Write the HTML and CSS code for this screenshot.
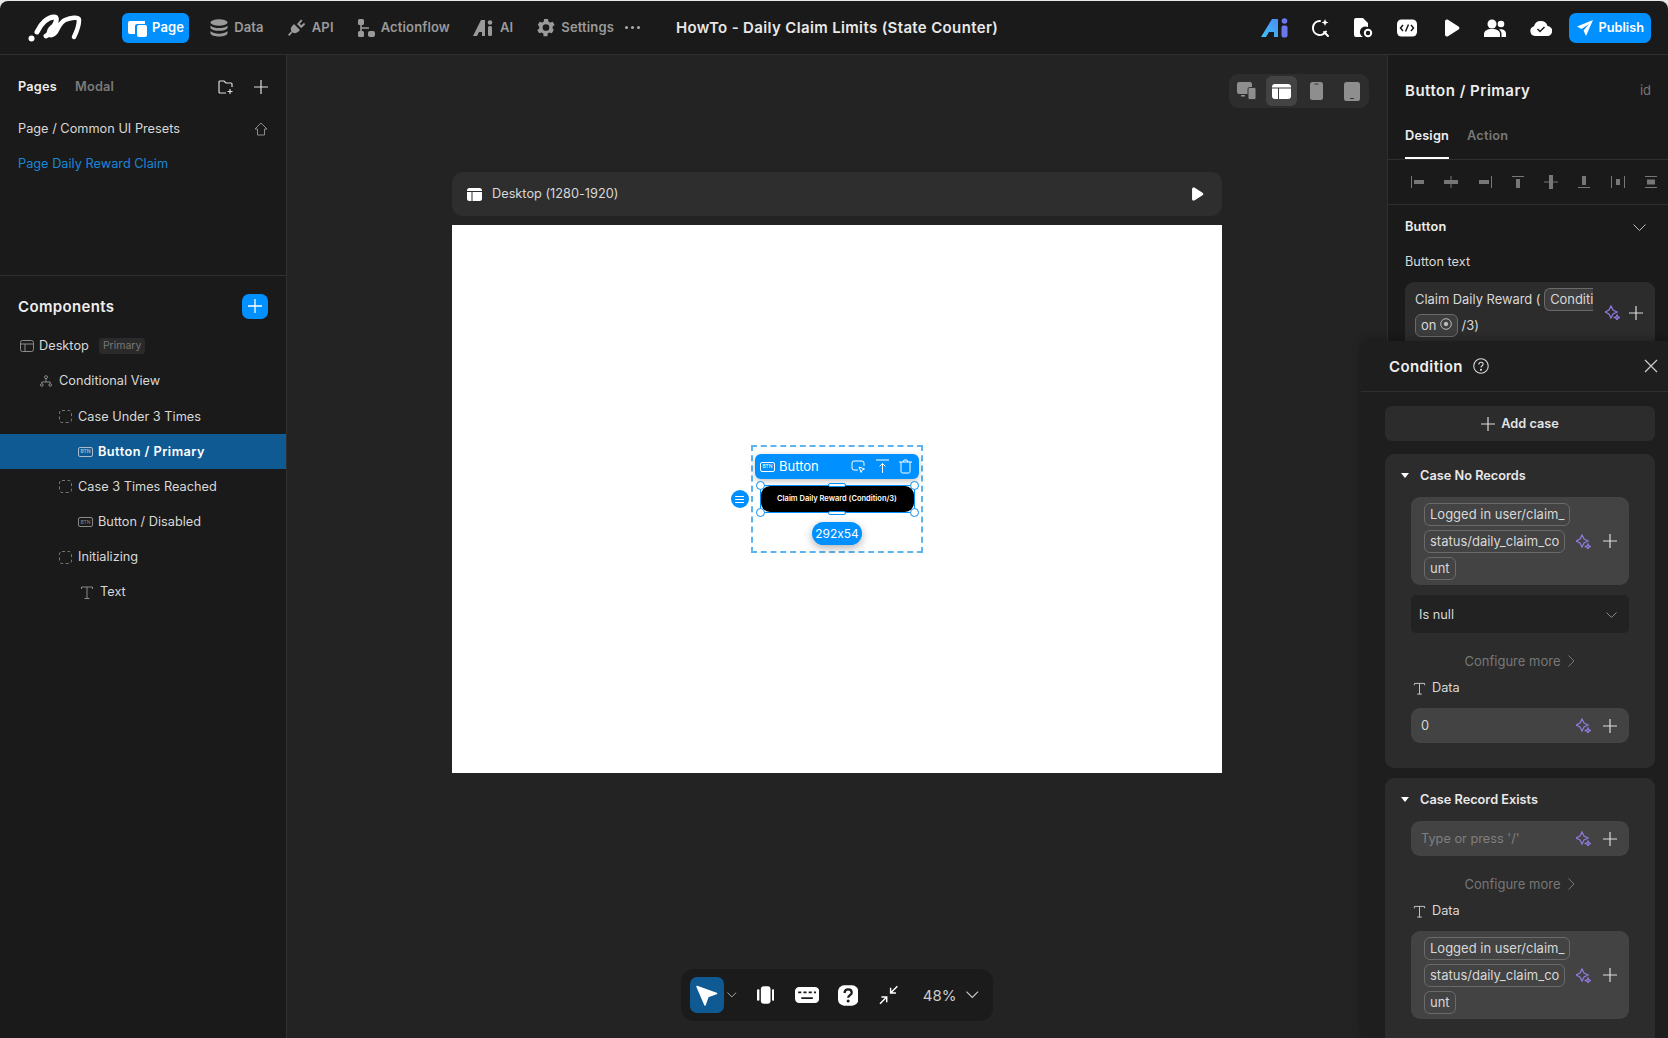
FILE: index.html
```html
<!DOCTYPE html>
<html>
<head>
  <meta charset="UTF-8">
  <title>HowTo - Daily Claim Limits</title>
  <link rel="stylesheet" href="styles.css">
</head>
<body>
  <div class="app">
    <header class="topbar">
      <svg class="logo" width="56" height="28" viewBox="0 0 56 28" fill="none" stroke="#fff" stroke-linecap="round" stroke-width="5"><circle cx="3.500" cy="24.500" r="3" fill="#fff" stroke="none"/><path d="M9 18C13 9 20 3 26 3c3 0 3 3 1 7-2 5-6 11-9 12"/><path d="M30 11c-4-1-9 4-9 8 0 4 6 2 8-3 2-4 4-8 8-10 5-2 14-4 14 0 0 6-3 13-5 17" stroke-width="4.500"/></svg>
      <nav class="nav">
        <a class="nav-item active"><svg width="21" height="19" viewBox="0 0 21 19" fill="#fff"><path d="M2 3h15v3H9a2 2 0 0 0-2 2v8H2a2 2 0 0 1-2-2V5a2 2 0 0 1 2-2z"/><rect x="9" y="7" width="10" height="12" rx="2"/></svg>Page</a>
        <a class="nav-item"><svg width="18" height="18" viewBox="0 0 18 18" fill="#9a9a9a"><ellipse cx="9" cy="3.500" rx="8.500" ry="3.200"/><path d="M.5 6.500C2 8.500 6 9 9 9s7-.5 8.500-2.500V9c-1 2-5 2.800-8.500 2.800S1.500 11 .5 9zM.5 12c1.500 2 5.500 2.700 8.500 2.700s7-.7 8.500-2.700v2.500c-1 2.200-5 3-8.500 3s-7.500-.8-8.500-3z"/></svg>Data</a>
        <a class="nav-item"><svg width="19" height="19" viewBox="0 0 19 19" fill="#9a9a9a"><path d="M7 6l6 6-2 2c-2 1.500-4 1.500-5.500.2L2.500 18 1 16.500l3.500-3.200C3.500 12 3.500 10 5 8.300z"/><path d="M11 5l3-3.500 1.500 1.300-2.800 3 1.500 1.500 3-2.500L18 6.500l-3 3-1 .5-4-4z"/></svg>API</a>
        <a class="nav-item"><svg width="18" height="18" viewBox="0 0 18 18" fill="#9a9a9a"><rect x="1" y="0" width="6" height="6" rx="1.500"/><rect x="1" y="12" width="6" height="6" rx="1.500"/><rect x="11" y="12" width="7" height="6" rx="2"/><path d="M3.200 5h1.600v3.200H12v1.600H4.800V13H3.200z"/></svg>Actionflow</a>
        <a class="nav-item"><svg width="21" height="16" viewBox="0 0 21 16" fill="#9a9a9a"><path d="M8 0h4v16H9v-4H6l-2 4H0z"/><circle cx="17" cy="2.500" r="2.300"/><rect x="15" y="6" width="4" height="10" rx="1.500"/></svg>AI</a>
        <a class="nav-item"><svg width="23" height="23" viewBox="0 0 24 24" fill="#9a9a9a"><path d="M19.400 13c.1-.3.100-.7.100-1s0-.7-.1-1l2.100-1.600-2-3.500-2.500 1a7 7 0 0 0-1.700-1L14.500 3h-4l-.4 2.900c-.6.300-1.200.6-1.700 1l-2.500-1-2 3.500L5.500 11c0 .3-.1.700-.1 1s0 .7.1 1l-2.100 1.600 2 3.500 2.500-1c.5.400 1.100.7 1.700 1l.4 2.900h4l.4-2.900c.6-.3 1.200-.6 1.700-1l2.500 1 2-3.500zM12.500 15.500a3.500 3.500 0 1 1 0-7 3.500 3.500 0 0 1 0 7z"/></svg>Settings</a>
        <a class="nav-dots"><i></i><i></i><i></i></a>
      </nav>
      <h1 class="doc-title">HowTo - Daily Claim Limits (State Counter)</h1>
      <div class="actions">
        <svg width="28" height="20" viewBox="0 0 28 20"><defs><linearGradient id="aig" x1="0" y1="1" x2="1" y2="0"><stop offset="0" stop-color="#3fc4f5"/><stop offset="1" stop-color="#4a8cf5"/></linearGradient></defs><path d="M11 1h6v18h-4v-5H8l-3 5H0z" fill="url(#aig)"/><circle cx="23.500" cy="3" r="2.800" fill="#6a78ee"/><rect x="20.500" y="7.500" width="6" height="12" rx="2" fill="#6a78ee"/></svg>
        <svg width="20" height="20" viewBox="0 0 20 20" fill="none" stroke="#fff" stroke-width="2" stroke-linecap="round"><path d="M10 3a7 7 0 1 0 6 10.500M14 14l4 4"/><path d="M15 1l1 2.500L18.500 4.500 16 5.500 15 8l-1-2.500L11.500 4.500 14 3.500z" fill="#fff" stroke="none"/></svg>
        <svg width="19" height="20" viewBox="0 0 19 20"><path d="M2 0h7l5 5v4a5.500 5.500 0 0 0-5 10H2a2 2 0 0 1-2-2V2a2 2 0 0 1 2-2z" fill="#fff"/><circle cx="14" cy="15" r="3.200" fill="none" stroke="#fff" stroke-width="2"/></svg>
        <svg width="20" height="18" viewBox="0 0 20 18"><rect width="20" height="17" y=".5" rx="4.500" fill="#fff"/><path d="M6 6L3.500 9 6 12M14 6l2.500 3L14 12M11.500 5.500l-3 7" fill="none" stroke="#1a1a1a" stroke-width="1.500"/></svg>
        <svg width="16" height="18" viewBox="0 0 16 18" fill="#fff"><path d="M1 2.500C1 .8 2.500 0 4 .8l10.500 6.600c1.300.8 1.300 2.400 0 3.200L4 17.200c-1.500.8-3 0-3-1.700z"/></svg>
        <svg width="22" height="18" viewBox="0 0 22 18" fill="#fff"><circle cx="8" cy="5" r="4.500"/><path d="M0 18v-3c0-3 3-5 8-5s8 2 8 5v3z"/><circle cx="17" cy="5" r="3.300"/><path d="M17.500 18v-3c0-2-1-3.500-2.500-4.500 4-.8 7 1 7 4v3.500z"/></svg>
        <svg width="22" height="16" viewBox="0 0 22 16"><path d="M5 16a5 5 0 0 1-1-9.800A7 7 0 0 1 17.500 6 5 5 0 0 1 17 16z" fill="#fff"/><path d="M7.500 9l2.500 2.500L14.500 7" fill="none" stroke="#1a1a1a" stroke-width="1.500"/></svg>
        <a class="publish"><svg width="16" height="16" viewBox="0 0 16 16" fill="#fff"><path d="M16 0L0 6.500l4.500 2.500L12 4 6.500 10.500 9 16z"/></svg>Publish</a>
      </div>
    </header>

    <div class="workspace">
      <aside class="left">
        <section class="pages">
          <div class="pages-head">
            <b class="tab on">Pages</b><b class="tab">Modal</b>
            <span class="spacer"></span>
            <svg width="16" height="15" viewBox="0 0 16 15" fill="none" stroke="#ddd" stroke-width="1.200"><path d="M8 13H2a1 1 0 0 1-1-1V2a1 1 0 0 1 1-1h4l2 2h5a1 1 0 0 1 1 1v3M12 9v5M9.500 11.500h5"/></svg>
            <svg class="ico-gap" width="14" height="14" viewBox="0 0 14 14" stroke="#ddd" stroke-width="1.200"><path d="M7 0v14M0 7h14"/></svg>
          </div>
          <div class="page-row">Page / Common UI Presets<span class="spacer"></span><svg width="14" height="14" viewBox="0 0 14 14" fill="none" stroke="#8a8a8a"><path d="M1 7l6-6 6 6h-2.500v6h-7V7z"/></svg></div>
          <div class="page-row current">Page Daily Reward Claim</div>
        </section>

        <section class="components">
          <div class="comp-head">Components<span class="spacer"></span><a class="add-btn"><svg width="14" height="14" viewBox="0 0 14 14" stroke="#fff" stroke-width="1.300"><path d="M7 0v14M0 7h14"/></svg></a></div>
          <ul class="tree">
            <li class="node lv0"><svg width="14" height="12" viewBox="0 0 14 12" fill="none" stroke="#8a8a8a"><rect x=".5" y=".5" width="13" height="11" rx="2"/><path d="M.5 4h13M5 4v7.500"/></svg>Desktop<span class="tag">Primary</span></li>
            <li class="node lv1"><svg width="12" height="12" viewBox="0 0 12 12" fill="none" stroke="#8a8a8a"><circle cx="6" cy="2.200" r="1.500"/><circle cx="1.800" cy="10" r="1.300"/><circle cx="10.200" cy="10" r="1.300"/><path d="M6 4v3M1.800 8.500V7h8.400v1.500"/></svg>Conditional View</li>
            <li class="node lv2"><svg class="dash" width="13" height="13" viewBox="0 0 13 13" fill="none"><rect x=".5" y=".5" width="12" height="12" rx="2.500"/></svg>Case Under 3 Times</li>
            <li class="node lv3 selected"><span class="btn-ico">BTN</span>Button / Primary</li>
            <li class="node lv2"><svg class="dash" width="13" height="13" viewBox="0 0 13 13" fill="none"><rect x=".5" y=".5" width="12" height="12" rx="2.500"/></svg>Case 3 Times Reached</li>
            <li class="node lv3"><span class="btn-ico">BTN</span>Button / Disabled</li>
            <li class="node lv2"><svg class="dash" width="13" height="13" viewBox="0 0 13 13" fill="none"><rect x=".5" y=".5" width="12" height="12" rx="2.500"/></svg>Initializing</li>
            <li class="node lv3"><svg class="t-ico" width="14" height="13" viewBox="0 0 14 13" fill="none" stroke="#8a8a8a"><path d="M1.500 3V1h11v2M7 1v11.500M4.500 12.500h5"/></svg>Text</li>
          </ul>
        </section>
      </aside>

      <main class="canvas">
        <div class="devices">
          <a class="dev"><svg width="19" height="18" viewBox="0 0 19 18" fill="#8e8e8e"><rect width="15" height="12" rx="2"/><rect x="4" y="13" width="4" height="1.500"/><rect x="11" y="5.500" width="8" height="12" rx="1.500" stroke="#333"/></svg></a>
          <a class="dev on"><svg width="19" height="15" viewBox="0 0 19 15"><rect width="19" height="15" rx="3" fill="#fff"/><path d="M0 4h19M6.500 4v11" stroke="#3c3c3c"/></svg></a>
          <a class="dev"><svg width="13" height="18" viewBox="0 0 13 18"><rect width="13" height="18" rx="2.500" fill="#8e8e8e"/><path d="M4.500 2h4" stroke="#333"/></svg></a>
          <a class="dev"><svg width="16" height="19" viewBox="0 0 16 19"><rect width="16" height="19" rx="2.500" fill="#8e8e8e"/><path d="M6 16.500h4" stroke="#333"/></svg></a>
        </div>

        <div class="frame-bar">
          <svg width="15" height="13" viewBox="0 0 15 13"><rect width="15" height="13" rx="2.500" fill="#fff"/><path d="M0 3.500h15M5 3.500V13" stroke="#2e2e2e"/></svg>
          <span>Desktop (1280-1920)</span>
          <span class="spacer"></span>
          <svg width="13" height="14" viewBox="0 0 16 18" fill="#fff"><path d="M1 2.500C1 .8 2.500 0 4 .8l10.500 6.600c1.300.8 1.300 2.400 0 3.200L4 17.200c-1.500.8-3 0-3-1.700z"/></svg>
        </div>
        <div class="artboard">
          <div class="selection">
            <div class="sel-bar">
              <span class="btn-ico light">BTN</span><span class="sel-name">Button</span>
              <span class="spacer"></span>
              <svg width="15" height="15" viewBox="0 0 15 15" fill="none" stroke="#fff"><path d="M7 11H3a2 2 0 0 1-2-2V4a2 2 0 0 1 2-2h8a2 2 0 0 1 2 2v3"/><path d="M8 8l5.500 2-2.300 1 -1 2.500z"/></svg>
              <svg width="13" height="15" viewBox="0 0 13 15" fill="none" stroke="#fff"><path d="M0 1h13M6.500 14V4.500M3.500 7.500l3-3 3 3"/></svg>
              <svg width="13" height="15" viewBox="0 0 13 15" fill="none" stroke="#fff"><path d="M0 3h13M4 3l1-2h3l1 2M2 3v9.500A1.500 1.500 0 0 0 3.500 14h6a1.500 1.500 0 0 0 1.500-1.500V3"/></svg>
            </div>
            <div class="sel-target">
              <div class="claim">Claim Daily Reward (Condition/3)</div>
              <i class="handle tl"></i><i class="handle tr"></i><i class="handle bl"></i><i class="handle br"></i>
              <i class="grip top"></i><i class="grip bottom"></i>
              <a class="sel-menu"><i></i><i></i><i></i></a>
            </div>
            <div class="sel-size">292x54</div>
          </div>
        </div>

        <div class="dock">
          <a class="dock-arrow"><svg width="22" height="22" viewBox="0 0 22 22" fill="#fff"><path d="M1 2.500L20.500 9.500 12 12.500 9 21z" stroke="#fff" stroke-linejoin="round" stroke-width="1.500"/></svg></a>
          <svg class="caret" width="10" height="6" viewBox="0 0 10 6" fill="none" stroke="#aaa"><path d="M.5.500L5 5 9.500.500"/></svg>
          <svg width="18" height="18" viewBox="0 0 18 18" fill="#fff"><rect x="4" y="0" width="10" height="18" rx="3"/><rect x="0" y="3" width="2.500" height="12" rx="1.200"/><rect x="15.500" y="3" width="2.500" height="12" rx="1.200"/></svg>
          <svg width="25" height="16" viewBox="0 0 23 15"><rect width="23" height="15" rx="4" fill="#fff"/><path d="M3 5h3M8 5h3M13 5h3M18 5h2M6 10.500h11" stroke="#1b1b1b" stroke-width="1.800"/></svg>
          <svg class="help" width="21" height="21" viewBox="0 0 20 20"><rect width="20" height="20" rx="6" fill="#fff"/><path d="M6.500 7.500C6.500 5.500 8 4 10 4s3.500 1.300 3.500 3.200c0 2.300-3.500 2.500-3.500 5" fill="none" stroke="#1b1b1b" stroke-width="2.200"/><circle cx="10" cy="15.500" r="1.500" fill="#1b1b1b"/></svg>
          <svg width="20" height="20" viewBox="0 0 20 20" fill="none" stroke="#fff" stroke-width="1.500"><path d="M19 1l-7 7M12 2.500V8h5.500M1 19l7-7M2.500 12H8v5.500"/></svg>
          <span class="zoom-val">48%</span>
          <svg width="13" height="8" viewBox="0 0 13 8" fill="none" stroke="#ccc" stroke-width="1.200"><path d="M.5.500L6.500 6.500 12.500.500"/></svg>
        </div>
      </main>

      <aside class="right">
        <div class="prop-head"><b>Button / Primary</b><span class="spacer"></span><span class="id">id</span></div>
        <div class="prop-tabs"><b class="ptab on">Design</b><b class="ptab">Action</b></div>
        <div class="aligns">
          <svg width="14" height="12" viewBox="0 0 14 12"><path d="M.5 0v12" stroke="#777"/><rect x="3" y="4" width="10" height="4" fill="#777"/></svg>
          <svg width="14" height="12" viewBox="0 0 14 12"><path d="M7 0v12" stroke="#777"/><rect y="4" width="14" height="4" fill="#777"/></svg>
          <svg width="14" height="12" viewBox="0 0 14 12"><path d="M13.500 0v12" stroke="#777"/><rect x="1" y="4" width="10" height="4" fill="#777"/></svg>
          <svg width="14" height="12" viewBox="0 0 14 12"><path d="M1 .500h12" stroke="#777"/><rect x="5" y="3" width="4" height="9" fill="#777"/></svg>
          <svg width="14" height="14" viewBox="0 0 14 14"><path d="M0 7h14" stroke="#777"/><rect x="5" width="4" height="14" fill="#777"/></svg>
          <svg width="14" height="12" viewBox="0 0 14 12"><path d="M1 11.500h12" stroke="#777"/><rect x="5" y="0" width="4" height="9" fill="#777"/></svg>
          <svg width="14" height="12" viewBox="0 0 14 12"><path d="M.5 0v12M13.500 0v12" stroke="#777"/><rect x="5" y="3" width="4" height="6" fill="#777"/></svg>
          <svg width="14" height="12" viewBox="0 0 14 12"><path d="M1 .500h12M1 11.500h12" stroke="#777"/><rect x="3" y="3.500" width="8" height="5" fill="#777"/></svg>
        </div>
        <div class="prop-section">
          <div class="section-title"><b>Button</b><span class="spacer"></span><svg width="13" height="7" viewBox="0 0 13 7" fill="none" stroke="#bbb"><path d="M.5.500L6.500 6.500 12.500.500"/></svg></div>
          <div class="field-label">Button text</div>
          <div class="text-input flat">
            <div class="inline-flow">Claim Daily Reward ( <span class="chip cut">Conditi</span> <span class="chip wrap">on <svg width="12" height="12" viewBox="0 0 12 12" fill="none" stroke="#bbb"><circle cx="6" cy="6" r="5.300"/><circle cx="6" cy="6" r="1.800" fill="#bbb"/></svg></span> /3)</div>
            <svg class="spark" width="15" height="15" viewBox="0 0 15 15" fill="none" stroke="#8f78d8" stroke-width="1.300"><path d="M6 1l2 4 4 2-4 2-2 4-2-4-4-2 4-2zM12 10l.8 1.700 1.700.8-1.700.8-.8 1.700-.8-1.700-1.700-.8 1.700-.8z"/></svg>
            <svg class="plus" width="14" height="14" viewBox="0 0 14 14" stroke="#ddd" stroke-width="1.200"><path d="M7 0v14M0 7h14"/></svg>
          </div>
        </div>

        <div class="condition">
          <div class="cond-head"><b>Condition</b><svg width="16" height="16" viewBox="0 0 15 15" fill="none" stroke="#ddd"><circle cx="7.500" cy="7.500" r="6.800"/><path d="M5.500 6c0-1.200.9-2 2-2s2 .8 2 1.800c0 1.400-2 1.500-2 3"/><circle cx="7.500" cy="11" r=".5" fill="#ddd"/></svg><span class="spacer"></span><svg width="14" height="14" viewBox="0 0 14 14" stroke="#ccc" stroke-width="1.200"><path d="M1 1l12 12M13 1L1 13"/></svg></div>
          <div class="cond-body">
            <a class="add-case"><svg width="14" height="14" viewBox="0 0 14 14" stroke="#ddd" stroke-width="1.200"><path d="M7 0v14M0 7h14"/></svg>Add case</a>

            <div class="case first">
              <div class="case-title"><i class="tri"></i>Case No Records</div>
              <div class="text-input tall">
                <div class="chips"><span class="chip">Logged in user/claim_</span><span class="chip">status/daily_claim_co</span><span class="chip">unt</span></div>
                <svg class="spark" width="15" height="15" viewBox="0 0 15 15" fill="none" stroke="#8f78d8" stroke-width="1.300"><path d="M6 1l2 4 4 2-4 2-2 4-2-4-4-2 4-2zM12 10l.8 1.700 1.700.8-1.700.8-.8 1.700-.8-1.700-1.700-.8 1.700-.8z"/></svg>
                <svg class="plus" width="14" height="14" viewBox="0 0 14 14" stroke="#ddd" stroke-width="1.200"><path d="M7 0v14M0 7h14"/></svg>
              </div>
              <div class="select">Is null<span class="spacer"></span><svg width="11" height="6" viewBox="0 0 11 6" fill="none" stroke="#888"><path d="M.5.500L5.500 5.500 10.500.500"/></svg></div>
              <div class="more">Configure more<svg width="7" height="12" viewBox="0 0 7 12" fill="none" stroke="#777"><path d="M.5.500L6 6 .5 11.500"/></svg></div>
              <div class="data-label"><svg width="13" height="13" viewBox="0 0 14 13" fill="none" stroke="#ccc"><path d="M1.500 3V1h11v2M7 1v11.500M4.500 12.500h5"/></svg>Data</div>
              <div class="text-input">
                <div class="value">0</div>
                <svg class="spark" width="15" height="15" viewBox="0 0 15 15" fill="none" stroke="#8f78d8" stroke-width="1.300"><path d="M6 1l2 4 4 2-4 2-2 4-2-4-4-2 4-2zM12 10l.8 1.700 1.700.8-1.700.8-.8 1.700-.8-1.700-1.700-.8 1.700-.8z"/></svg>
                <svg class="plus" width="14" height="14" viewBox="0 0 14 14" stroke="#ddd" stroke-width="1.200"><path d="M7 0v14M0 7h14"/></svg>
              </div>
            </div>

            <div class="case">
              <div class="case-title"><i class="tri"></i>Case Record Exists</div>
              <div class="text-input">
                <div class="value muted">Type or press '/'</div>
                <svg class="spark" width="15" height="15" viewBox="0 0 15 15" fill="none" stroke="#8f78d8" stroke-width="1.300"><path d="M6 1l2 4 4 2-4 2-2 4-2-4-4-2 4-2zM12 10l.8 1.700 1.700.8-1.700.8-.8 1.700-.8-1.700-1.700-.8 1.700-.8z"/></svg>
                <svg class="plus" width="14" height="14" viewBox="0 0 14 14" stroke="#ddd" stroke-width="1.200"><path d="M7 0v14M0 7h14"/></svg>
              </div>
              <div class="more">Configure more<svg width="7" height="12" viewBox="0 0 7 12" fill="none" stroke="#777"><path d="M.5.500L6 6 .5 11.500"/></svg></div>
              <div class="data-label"><svg width="13" height="13" viewBox="0 0 14 13" fill="none" stroke="#ccc"><path d="M1.500 3V1h11v2M7 1v11.500M4.500 12.500h5"/></svg>Data</div>
              <div class="text-input tall">
                <div class="chips"><span class="chip">Logged in user/claim_</span><span class="chip">status/daily_claim_co</span><span class="chip">unt</span></div>
                <svg class="spark" width="15" height="15" viewBox="0 0 15 15" fill="none" stroke="#8f78d8" stroke-width="1.300"><path d="M6 1l2 4 4 2-4 2-2 4-2-4-4-2 4-2zM12 10l.8 1.700 1.700.8-1.700.8-.8 1.700-.8-1.700-1.700-.8 1.700-.8z"/></svg>
                <svg class="plus" width="14" height="14" viewBox="0 0 14 14" stroke="#ddd" stroke-width="1.200"><path d="M7 0v14M0 7h14"/></svg>
              </div>
            </div>
          </div>
        </div>
      </aside>
    </div>
  </div>
</body>
</html>
```

FILE: styles.css
```css
* {
  box-sizing: border-box;
}

html,
body {
  margin: 0;
  height: 100%;
  overflow: hidden;
  background: #e8e8e8;
}

body {
  font: 12.750px/1.4 Inter, "Noto Sans", sans-serif;
  font-variant-ligatures: no-contextual;
  color: #d8d8d8;
}

b {
  font-weight: 600;
  letter-spacing: 0.2px;
}

a {
  cursor: pointer;
}

.spacer {
  flex: 1 1 0%;
}

.app {
  margin-top: 1px;
  height: 1037px;
  display: flex;
  flex-direction: column;
  background: #1a1a1a;
  border-radius: 8px 8px 0 0;
  overflow: hidden;
}

/* top bar */
.topbar {
  flex: 0 0 54px;
  display: flex;
  align-items: center;
  padding: 0 17px 0 28px;
  border-bottom: 1px solid #303030;
}

.logo {
  flex: 0 0 auto;
  margin-right: 38px;
}

.nav {
  display: flex;
  align-items: center;
  gap: 23px;
  width: 554px;
}

.nav-item {
  display: flex;
  align-items: center;
  gap: 6px;
  height: 30px;
  font-weight: 600;
  font-size: 13px;
  letter-spacing: 0.15px;
  color: #9a9a9a;
}

  .nav-item:nth-child(6) {
    gap: 4px;
    margin-left: -2px;
  }

.nav-item.active {
  gap: 3px;
  margin-right: -2px;
  padding: 0 5px 0 6px;
  background: #0090ff;
  border-radius: 6px;
  color: #fff;
}

.nav-dots {
  display: flex;
  gap: 3px;
  margin-left: -12px;
}

  .nav-dots i {
    width: 3px;
    height: 3px;
    background: #aaa;
    border-radius: 50%;
  }

.doc-title {
  margin: 0;
  font-size: 15px;
  font-weight: 600;
  letter-spacing: 0.35px;
  color: #e8e8e8;
  white-space: nowrap;
}

.actions {
  margin-left: auto;
  display: flex;
  align-items: center;
  gap: 24px;
}

  .actions svg:nth-child(2) {
    margin-left: -3px;
  }

  .actions svg:nth-child(5) {
    margin-left: 3px;
  }

.publish {
  display: flex;
  align-items: center;
  gap: 6px;
  height: 30px;
  margin-left: -7px;
  padding: 0 7px 0 8px;
  background: #0090ff;
  border-radius: 7px;
  font-weight: 600;
  color: #fff;
}

.workspace {
  flex: 1 1 0%;
  min-height: 0;
  display: flex;
}

/* left panel */
.left {
  flex: 0 0 287px;
  border-right: 1px solid #303030;
}

.pages {
  height: 221px;
  padding: 0 18px;
  border-bottom: 1px solid #303030;
}

.pages-head {
  height: 56px;
  padding-top: 8px;
  display: flex;
  align-items: center;
  gap: 18px;
}

.ico-gap {
  margin-left: 2px;
}

.tab {
  color: #7a7a7a;
}

  .tab.on {
    color: #eee;
  }

.page-row {
  height: 35px;
  display: flex;
  align-items: center;
}

  .page-row.current {
    color: #1a86d8;
  }

.comp-head {
  height: 46px;
  margin-top: 7px;
  padding: 0 18px;
  display: flex;
  align-items: center;
  font-size: 15px;
  font-weight: 600;
  letter-spacing: 0.35px;
  color: #eee;
}

.add-btn {
  width: 26px;
  height: 25px;
  display: flex;
  align-items: center;
  justify-content: center;
  background: #0090ff;
  border-radius: 7px;
}

.tree {
  margin: -1px 0 0;
  padding: 0;
  list-style: none;
}

.node {
  height: 35.200px;
  padding-top: 1px;
  display: flex;
  align-items: center;
  gap: 7px;
}

.lv0 { padding-left: 20px; gap: 5px; }
.lv1 { padding-left: 40px; }
.lv2 { padding-left: 59px; gap: 6px; }
.lv3 { padding-left: 78px; gap: 5px; }

.node.selected {
  background: #0f5a93;
  color: #fff;
  font-weight: 600;
  letter-spacing: 0.45px;
}

.dash {
  stroke: #777;
  stroke-dasharray: 3 2.500;
}

.t-ico {
  margin: 0 1px 0 2px;
}

.btn-ico {
  width: 15px;
  height: 10px;
  display: inline-flex;
  align-items: center;
  justify-content: center;
  border: 1px solid #8a8a8a;
  border-radius: 2px;
  font-size: 5px;
  line-height: 1;
  letter-spacing: 0;
  color: #8a8a8a;
}

  .selected .btn-ico {
    border-color: #a8bccb;
    color: #a8bccb;
  }

  .btn-ico.light {
    border-color: #fff;
    color: #fff;
  }

.tag {
  margin-left: 5px;
  padding: 0 4px;
  background: #2a2a2a;
  border-radius: 3px;
  font-size: 10.500px;
  line-height: 16px;
  color: #777;
}

/* canvas */
.canvas {
  position: relative;
  flex: 1 1 0%;
  min-width: 0;
  padding: 117px 165px 0;
  background: #232323;
}

.devices {
  position: absolute;
  top: 19px;
  right: 18px;
  display: flex;
  background: #2d2d2d;
  border-radius: 9px;
}

.dev {
  width: 35px;
  height: 34px;
  display: flex;
  align-items: center;
  justify-content: center;
  border: 2px solid transparent;
  background-clip: padding-box;
  border-radius: 8px;
}

  .dev.on {
    background-color: #434343;
  }

.frame-bar {
  height: 44px;
  display: flex;
  align-items: center;
  gap: 10px;
  padding: 0 18px 0 15px;
  background: #2e2e2e;
  border-radius: 11px;
}

.artboard {
  margin-top: 9px;
  height: 548px;
  display: flex;
  align-items: flex-start;
  justify-content: center;
  background: #fff;
}

.selection {
  margin-top: 220px;
  width: 172px;
  height: 108px;
  padding: 7px 2px 0;
  border: 2px dashed #5db4ee;
  display: flex;
  flex-direction: column;
  align-items: center;
}

.sel-bar {
  width: 100%;
  height: 25px;
  flex: 0 0 auto;
  display: flex;
  align-items: center;
  gap: 9px;
  padding: 0 7px 0 5px;
  background: #0090ff;
  border-radius: 6px;
  color: #fff;
  font-size: 13px;
  box-shadow: 0 2px 6px rgba(0, 0, 0, 0.25);
}

  .sel-bar svg {
    margin-left: 1px;
  }

.sel-name {
  margin-left: -5px;
}

.sel-target {
  position: relative;
  width: 155px;
  height: 28px;
  margin-top: 6px;
  flex: 0 0 auto;
  border: 1px solid #0090ff;
}

.claim {
  height: 100%;
  display: flex;
  align-items: center;
  justify-content: center;
  background: #000;
  border-radius: 9px;
  font-size: 7.500px;
  font-weight: 600;
  color: #fff;
}

.handle {
  position: absolute;
  width: 9px;
  height: 9px;
  background: #fff;
  border: 1px solid #0090ff;
  border-radius: 50%;
}

.tl { left: -5px; top: -5px; }
.tr { right: -5px; top: -5px; }
.bl { left: -5px; bottom: -5px; }
.br { right: -5px; bottom: -5px; }

.grip {
  position: absolute;
  left: 50%;
  width: 18px;
  height: 4px;
  margin-left: -9px;
  background: #fff;
  border: 1px solid #0090ff;
  border-radius: 2px;
}

.grip.top { top: -3px; }
.grip.bottom { bottom: -3px; }

.sel-menu {
  position: absolute;
  left: -30px;
  top: 4px;
  width: 18px;
  height: 18px;
  display: flex;
  flex-direction: column;
  align-items: center;
  justify-content: center;
  gap: 2px;
  background: #0090ff;
  border-radius: 50%;
}

  .sel-menu i {
    width: 9px;
    height: 1px;
    background: #fff;
  }

.sel-size {
  margin-top: 9px;
  padding: 0 3px;
  flex: 0 0 auto;
  background: #0090ff;
  border-radius: 12px;
  line-height: 23px;
  color: #fff;
  font-size: 12px;
  box-shadow: 0 3px 8px rgba(0, 0, 0, 0.3);
}

.dock {
  position: absolute;
  left: 394px;
  bottom: 17px;
  width: 312px;
  height: 52px;
  display: flex;
  align-items: center;
  padding: 0 14px 0 9px;
  gap: 21px;
  background: #1b1b1b;
  border-radius: 13px;
}

.dock-arrow {
  width: 35px;
  height: 36px;
  display: flex;
  align-items: center;
  justify-content: center;
  background: #0f5a93;
  border-radius: 7px;
}

.caret {
  margin-left: -18px;
  margin-right: -1px;
}

.help {
  margin-left: -2px;
}

.zoom-val {
  margin-left: 3px;
  margin-right: -11px;
  font-size: 15px;
  color: #ccc;
}

/* right panel */
.right {
  position: relative;
  flex: 0 0 281px;
  border-left: 1px solid #303030;
  background: #1a1a1a;
}

.prop-head {
  height: 69px;
  padding: 2px 17px 0;
  display: flex;
  align-items: center;
  font-size: 15px;
  color: #eee;
}

  .prop-head b {
    letter-spacing: 0.5px;
  }

.id {
  font-size: 13px;
  color: #777;
}

.prop-tabs {
  height: 36px;
  display: flex;
  gap: 18px;
  padding-left: 17px;
  border-bottom: 1px solid #303030;
}

.ptab {
  padding-top: 3px;
  color: #777;
}

  .ptab.on {
    border-bottom: 2px solid #fff;
    color: #eee;
  }

.aligns {
  height: 45px;
  display: flex;
  align-items: center;
  gap: 19.300px;
  padding-left: 23px;
  border-bottom: 1px solid #303030;
}

.prop-section {
  padding: 0 13px 0 17px;
}

.section-title {
  height: 44px;
  display: flex;
  align-items: center;
  padding-right: 9px;
  color: #eee;
}

.field-label {
  height: 24px;
  margin-top: 4px;
  margin-bottom: 5px;
}

.text-input {
  display: flex;
  align-items: center;
  min-height: 35px;
  padding: 0 10px;
  background: #434343;
  border-radius: 9px;
  gap: 9px;
}

  .text-input.flat {
    height: 70px;
    gap: 6px;
    background: #2c2c2c;
    padding-bottom: 9px;
  }

  .text-input.tall {
    height: 88px;
  }

.inline-flow {
  flex: 1 1 0%;
  min-width: 0;
  line-height: 26px;
  font-size: 12.900px;
}

.value {
  flex: 1 1 0%;
}

.muted {
  color: #7f7f7f;
}

.spark {
  flex: 0 0 auto;
}

.plus {
  flex: 0 0 auto;
  margin: 0 2px 0 3px;
}

.chips {
  flex: 1 1 0%;
  min-width: 0;
  display: flex;
  flex-wrap: wrap;
  gap: 4px;
  padding-left: 3px;
  font-size: 13px;
}

.chip {
  display: inline-block;
  padding: 0 5px;
  border: 1px solid #6a6a6a;
  border-radius: 6px;
  line-height: 21px;
  white-space: nowrap;
}

  .chip.cut {
    border-right: 0;
    border-radius: 6px 0 0 6px;
    background: #3d3d3d;
    padding-right: 0;
  }

  .chip.wrap {
    background: #3d3d3d;
  }

/* condition drawer */
.condition {
  position: absolute;
  left: -27px;
  right: 0;
  top: 286px;
  bottom: 0;
  background: #1e1e1e;
  border-radius: 8px 0 0 0;
  box-shadow: 0 -2px 8px rgba(0, 0, 0, 0.25);
  overflow: hidden;
}

.cond-head {
  height: 51px;
  display: flex;
  align-items: center;
  gap: 10px;
  padding: 0 10px 0 28px;
  border-bottom: 1px solid #2e2e2e;
  font-size: 15px;
  color: #eee;
}

  .cond-head b {
    letter-spacing: 0.4px;
  }

.cond-body {
  padding: 14px 13px 0 24px;
}

.add-case {
  height: 35px;
  display: flex;
  align-items: center;
  justify-content: center;
  gap: 6px;
  background: #2c2c2c;
  border-radius: 7px;
  font-weight: 600;
  color: #e4e4e4;
}

.case {
  margin-top: 10px;
  padding: 0 26px;
  background: #2c2c2c;
  border-radius: 9px;
  height: 400px;
}

  .case.first {
    margin-top: 13px;
    height: 314px;
  }

.case-title {
  height: 43px;
  margin-left: -10px;
  display: flex;
  align-items: center;
  gap: 11px;
  font-weight: 600;
  color: #e8e8e8;
}

.tri {
  width: 0;
  height: 0;
  border: 4px solid transparent;
  border-top: 5px solid #fff;
  border-bottom: 0;
}

.select {
  height: 38px;
  margin-top: 10px;
  padding: 2px 12px 0 8px;
  display: flex;
  align-items: center;
  background: #222;
  border-radius: 5px;
}

.more {
  height: 26px;
  margin-top: 15px;
  display: flex;
  align-items: center;
  justify-content: center;
  gap: 8px;
  font-size: 13px;
  color: #777;
}

.data-label {
  height: 26px;
  padding: 2px 0 0 2px;
  display: flex;
  align-items: center;
  gap: 6px;
  margin-bottom: 8px;
}
```
